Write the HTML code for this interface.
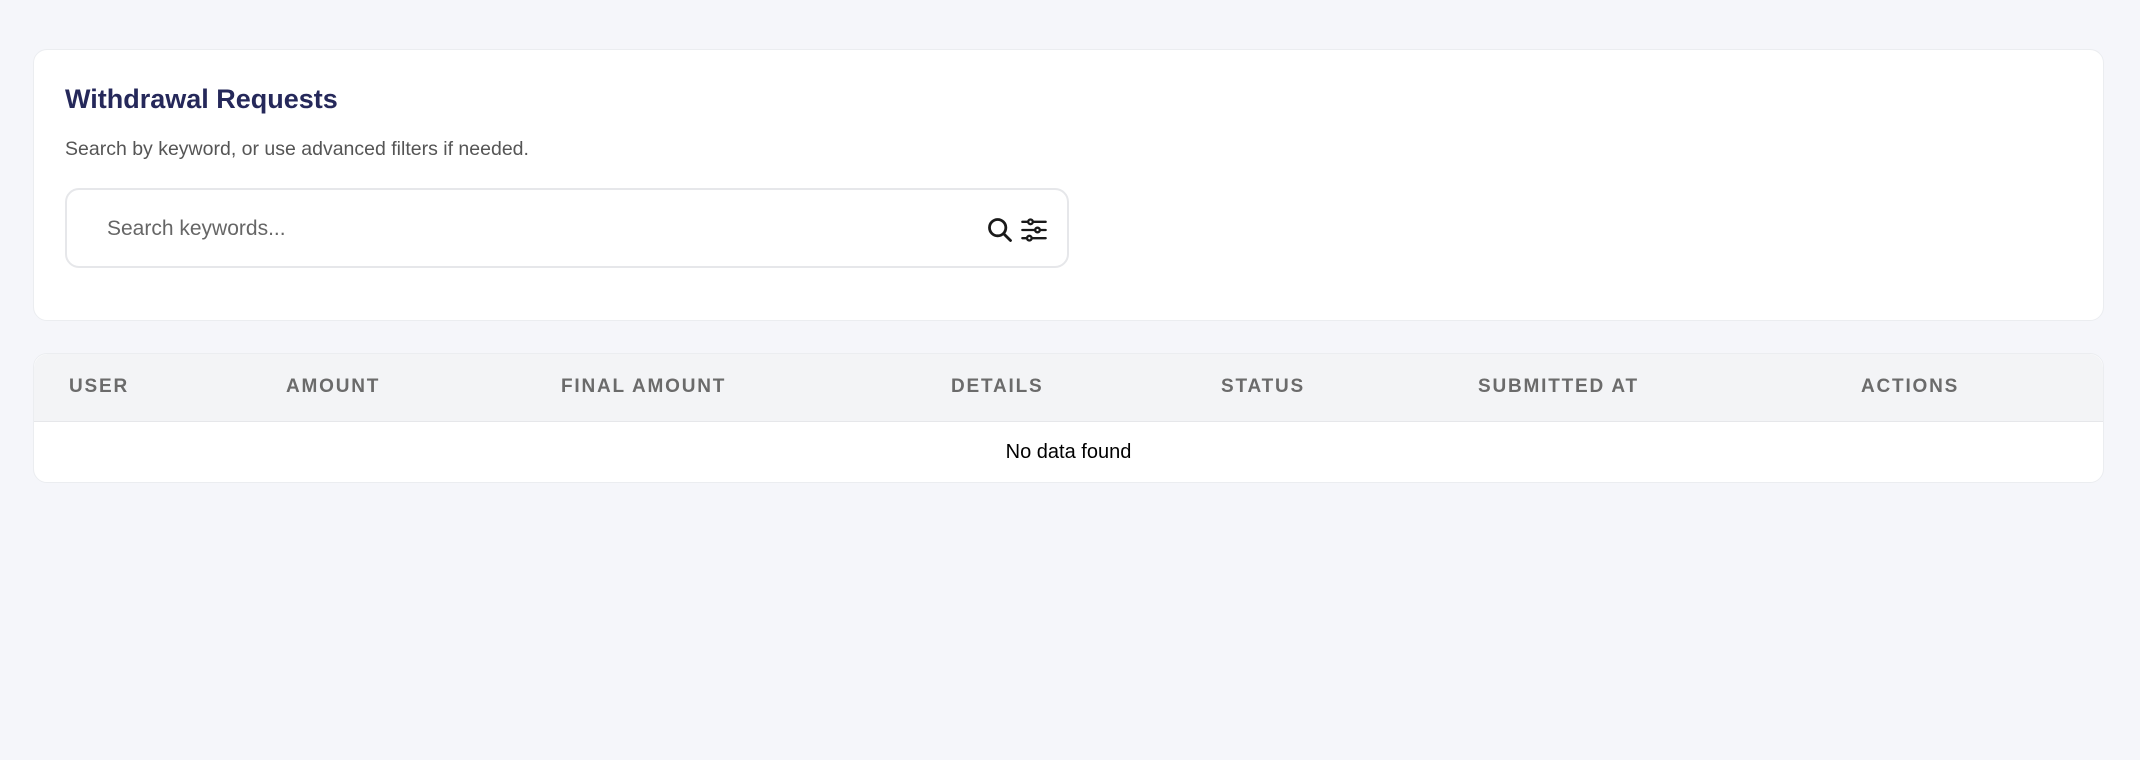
<!DOCTYPE html>
<html><head><style>
body{margin:0;width:2140px;height:760px;background:#f5f6fa;font-family:"Liberation Sans",sans-serif;position:relative;overflow:hidden}
.card{position:absolute;left:33px;width:2071px;background:#fff;border:1px solid #ebedf0;border-radius:14px;box-sizing:border-box}
h1{position:absolute;left:31px;margin:0;font-size:27px;font-weight:bold;color:#25285a}
.sub{position:absolute;left:31px;font-size:19.5px;color:#555}
.search{position:absolute;left:31px;width:1004px;height:80px;border:2px solid #e6e7ea;border-radius:14px;box-sizing:border-box}
.ph{position:absolute;left:40px;top:27px;font-size:21px;color:#666}
.th{position:absolute;top:0;height:67px;width:100%;background:#f3f4f6;border-bottom:1px solid #e6e7ea;border-radius:14px 14px 0 0}
.th span{position:absolute;top:22px;font-size:19px;font-weight:bold;color:#6b6b6b;letter-spacing:1.8px}
.nd{position:absolute;left:0;width:100%;text-align:center;top:87px;font-size:20px;color:#000}
</style></head><body>
<div class="card" style="top:49px;height:272px">
<h1 style="top:34px">Withdrawal Requests</h1>
<div class="sub" style="top:88px">Search by keyword, or use advanced filters if needed.</div>
<div class="search" style="top:138px">
<div class="ph">Search keywords...</div>
<svg style="position:absolute;left:919px;top:26px" width="28" height="28" viewBox="0 0 24 24" fill="none" stroke="#1a1a1a" stroke-width="2.4" stroke-linecap="round"><circle cx="10" cy="10" r="7"/><path d="M15.5 15.5L21 21"/></svg>
<svg style="position:absolute;left:953px;top:25px" width="28" height="30" viewBox="0 0 24 24" fill="none" stroke="#1a1a1a" stroke-width="2" stroke-linecap="round"><path d="M2 5h20M2 12h20M2 19h20"/><circle cx="9" cy="5" r="2" fill="#fff"/><circle cx="15" cy="12" r="2" fill="#fff"/><circle cx="8" cy="19" r="2" fill="#fff"/></svg>
</div>
</div>
<div class="card" style="top:353px;height:130px;overflow:hidden">
<div class="th">
<span style="left:35px">USER</span><span style="left:252px">AMOUNT</span><span style="left:527px">FINAL AMOUNT</span><span style="left:917px">DETAILS</span><span style="left:1187px">STATUS</span><span style="left:1444px">SUBMITTED AT</span><span style="left:1827px">ACTIONS</span>
</div>
<div class="nd">No data found</div>
</div>
</body></html>
